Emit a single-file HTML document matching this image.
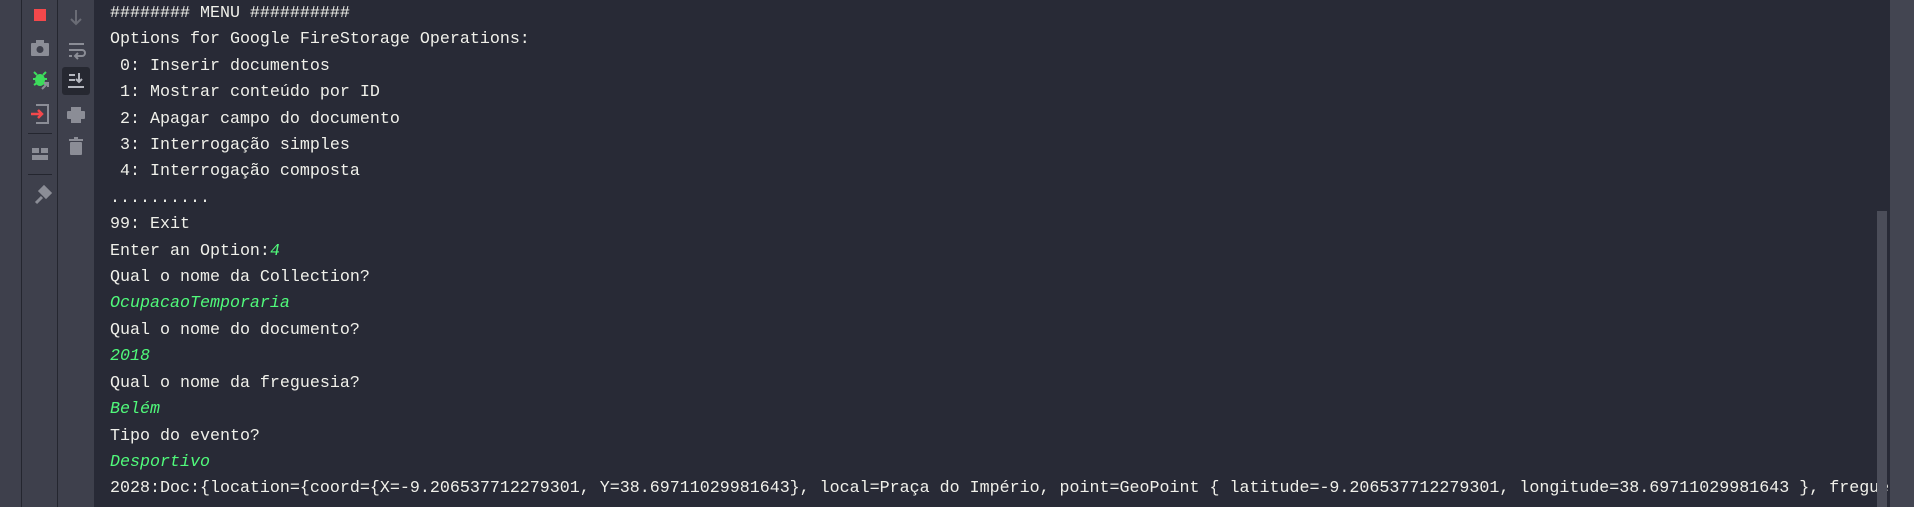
<!DOCTYPE html>
<html><head><meta charset="utf-8"><style>
html,body{margin:0;padding:0;width:1914px;height:507px;overflow:hidden;background:#282a36;}
#w{position:relative;width:1914px;height:507px;overflow:hidden;}
.p1{position:absolute;left:0;top:0;width:21px;height:507px;background:#3e404c;}
.b{position:absolute;top:0;width:1px;height:507px;background:#24262f;}
.p2{position:absolute;left:22px;top:0;width:35px;height:507px;background:#3e404c;}
.p3{position:absolute;left:58px;top:0;width:36px;height:507px;background:#3e404c;}
.txt{position:absolute;left:110px;top:1px;width:1780px;height:506px;overflow:hidden;font-family:"Liberation Mono",monospace;font-size:16.67px;line-height:26.4px;color:#f0f0ea;white-space:pre;}
.g{color:#50fa7b;font-style:italic;}
.sb{position:absolute;left:1877px;top:211px;width:10px;height:296px;background:#4b4d59;}
.rs{position:absolute;left:1890px;top:0;width:24px;height:507px;background:#434551;}
svg{position:absolute;left:0;top:0;}
</style></head><body><div id="w">
<div class="p1"></div><div class="b" style="left:21px"></div>
<div class="p2"></div><div class="b" style="left:57px"></div>
<div class="p3"></div>
<svg width="94" height="507">
<rect x="34" y="9" width="12" height="12" fill="#f4484b"/>
<rect x="31" y="43" width="18" height="13" rx="1" fill="#8b8d96"/><rect x="36" y="40" width="8" height="4" fill="#8b8d96"/><circle cx="40" cy="49.5" r="3.5" fill="#3e404c"/>
<path d="M34 72l3 3M46 72l-3 3M33 79h14M34 85l3-2M46 85l-3-2" stroke="#3ddc5c" stroke-width="2"/><ellipse cx="40" cy="80" rx="5" ry="6" fill="#3ddc5c"/><path d="M42 89l6-6M44 83h4v4" stroke="#8b8d96" stroke-width="2" fill="none"/>
<path d="M36 105h12v18h-12" stroke="#8b8d96" stroke-width="2" fill="none"/><path d="M31 114h11M38 110l4 4-4 4" stroke="#f4484b" stroke-width="2.5" fill="none"/>
<rect x="28" y="133" width="24" height="1" fill="#24262f"/>
<rect x="32" y="148" width="7" height="5" fill="#8b8d96"/><rect x="41" y="148" width="7" height="5" fill="#8b8d96"/><rect x="32" y="155" width="16" height="5" fill="#8b8d96"/>
<rect x="28" y="174" width="24" height="1" fill="#24262f"/>
<path d="M36 203l6-6M40 191l4-4 6 6-4 4z" stroke="#8b8d96" stroke-width="3" fill="#8b8d96"/>
<path d="M76 10v14M71 19l5 5 5-5" stroke="#6a6c75" stroke-width="2" fill="none"/>
<path d="M69 44h15M69 50h13a3 3 0 010 6h-6M78 53l-3 3 3 3M69 56h3" stroke="#8b8d96" stroke-width="2" fill="none"/>
<rect x="62" y="67" width="28" height="28" rx="3" fill="#262831"/>
<path d="M69 75h6M69 80h6M68 87h16M79 73v9M76 79l3 3 3-3" stroke="#b5b7bf" stroke-width="2" fill="none"/>
<rect x="71" y="107" width="10" height="4" fill="#8b8d96"/><rect x="67" y="111" width="18" height="8" rx="1" fill="#8b8d96"/><rect x="71" y="119" width="10" height="4" fill="#8b8d96"/>
<rect x="69" y="139" width="14" height="2" fill="#8b8d96"/><rect x="74" y="137" width="4" height="2" fill="#8b8d96"/><rect x="70" y="142" width="12" height="13" rx="1" fill="#8b8d96"/>
</svg>
<div class="txt">######## MENU ##########
Options for Google FireStorage Operations:
 0: Inserir documentos
 1: Mostrar conteúdo por ID
 2: Apagar campo do documento
 3: Interrogação simples
 4: Interrogação composta
..........
99: Exit
Enter an Option:<span class="g">4</span>
Qual o nome da Collection?
<span class="g">OcupacaoTemporaria</span>
Qual o nome do documento?
<span class="g">2018</span>
Qual o nome da freguesia?
<span class="g">Belém</span>
Tipo do evento?
<span class="g">Desportivo</span>
2028:Doc:{location={coord={X=-9.206537712279301, Y=38.69711029981643}, local=Praça do Império, point=GeoPoint { latitude=-9.206537712279301, longitude=38.69711029981643 }, fregue
######## MENU ##########</div>
<div class="sb"></div>
<div class="rs"></div>
</div></body></html>
